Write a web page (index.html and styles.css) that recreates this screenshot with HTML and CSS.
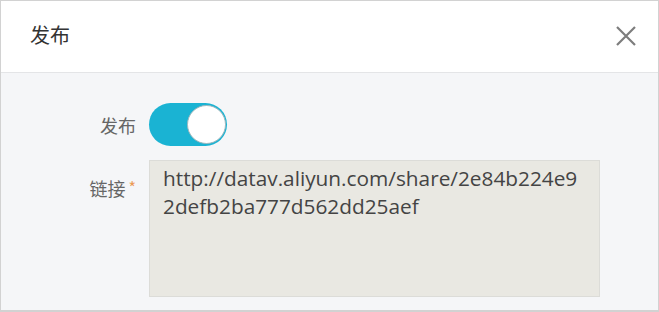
FILE: index.html
```html
<!DOCTYPE html>
<html>
    <head>
        <meta charset="utf-8">
        <link rel="stylesheet" href="styles.css">
    </head>
    <body>
        <div class="dialog">
            <header class="dialog-header">
                <h1 class="dialog-title">发布</h1>
                <span class="close-btn">
                    <svg width="24" height="24" viewBox="0 0 24 24">
                        <path d="M3 3 L21 21 M21 3 L3 21" stroke="#7d7d7d" stroke-width="2.2" fill="none"/>
                    </svg>
                </span>
            </header>

            <div class="dialog-body">
                <div class="form-row switch-row">
                    <label class="form-label">发布</label>
                    <div class="switch">
                        <span class="switch-knob"></span>
                    </div>
                </div>
                <div class="form-row link-row">
                    <label class="form-label">链接<span class="required">*</span></label>
                    <div class="link-box">http://datav.aliyun.com/share/2e84b224e92defb2ba777d562dd25aef</div>
                </div>
            </div>
        </div>
    </body>
</html>
```

FILE: styles.css
```css
body {
    margin: 0;
    font-family: "Noto Sans CJK SC", sans-serif;
    background: #fff;
}

.dialog {
    width: 659px;
    height: 312px;
    box-sizing: border-box;
    border: 1px solid #d2d2d2;
    border-bottom-width: 2px;
    background-color: #f5f6f8;
    display: flex;
    flex-direction: column;
}

.dialog-header {
    height: 72px;
    box-sizing: border-box;
    background-color: #fff;
    border-bottom: 1px solid #e4e5e7;
    display: flex;
    align-items: center;
    justify-content: space-between;
    padding: 0 20px 2px 29px;
}

.dialog-title {
    margin: 0 0 3px 0;
    font-size: 20px;
    font-weight: normal;
    color: #333;
}

.close-btn {
    display: flex;
    cursor: pointer;
}

.dialog-body {
    padding-top: 30px;
}

.form-row {
    display: flex;
}

.form-label {
    width: 135px;
    text-align: right;
    font-size: 18px;
    color: #666;
    flex-shrink: 0;
}

.switch-row {
    align-items: center;
}

.switch {
    margin-left: 13px;
    width: 78px;
    height: 43px;
    box-sizing: border-box;
    border-radius: 22px;
    background-color: #1ab3d3;
    display: flex;
    align-items: center;
    justify-content: flex-end;
    padding-right: 1px;
}

.switch-knob {
    width: 39px;
    height: 39px;
    box-sizing: border-box;
    border-radius: 50%;
    background-color: #fff;
    border: 1px solid #9fb7bd;
}

.link-row {
    margin-top: 14px;
}

.link-row .form-label {
    padding-top: 15px;
}

.required {
    color: #eb9a55;
    font-size: 16px;
    vertical-align: top;
    margin-left: 3px;
}

.link-box {
    margin-left: 13px;
    width: 451px;
    height: 137px;
    box-sizing: border-box;
    background-color: #e9e8e2;
    border: 1px solid #dcdcd8;
    padding: 3px 10px 0 13px;
    font-family: "Open Sans", sans-serif;
    font-size: 20.8px;
    line-height: 28px;
    color: #444;
    word-break: break-all;
}
```
